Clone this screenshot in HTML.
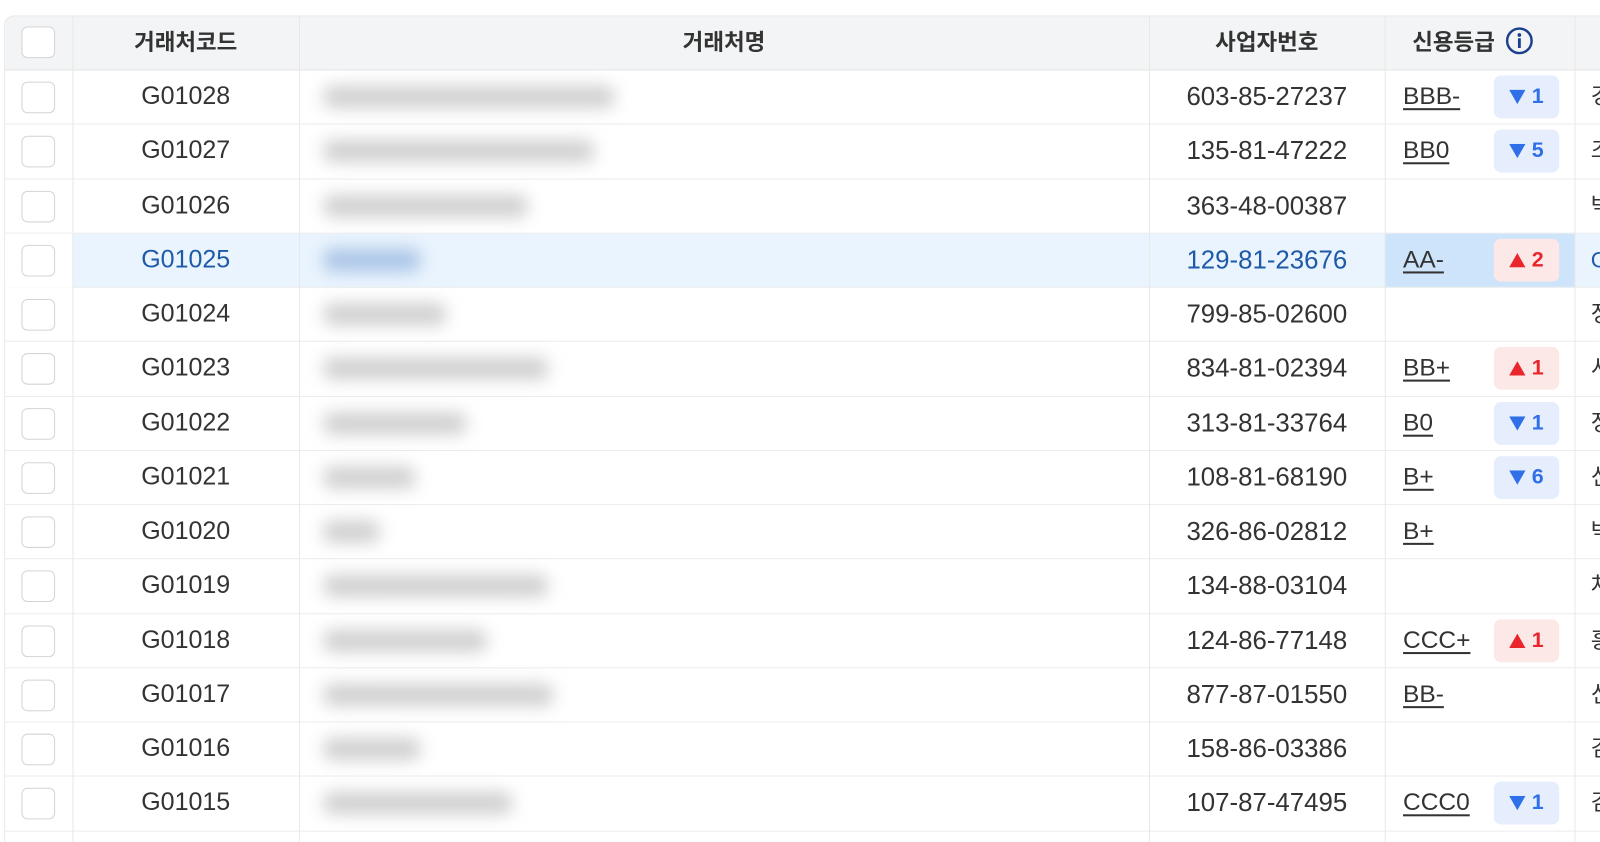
<!DOCTYPE html>
<html><head><meta charset="utf-8"><style>
*{margin:0;padding:0;box-sizing:border-box}
html,body{width:1600px;height:842px;overflow:hidden}
body{background:#fff;font-family:"Liberation Sans","Noto Sans CJK KR",sans-serif;color:#333;position:relative}
.wrap{position:absolute;left:0;top:0;width:1568px;height:825px;transform:scale(1.0204);transform-origin:0 0;overflow:hidden}
.tbl{position:absolute;left:4px;top:15px;width:1564px;height:810px;border-left:1px solid #e6e6e6;border-top:1px solid #e6e6e6;border-radius:10px 0 0 0;overflow:hidden}
.hd{position:absolute;left:0;top:0;width:1700px;height:53px;background:#f3f4f6;border-bottom:1px solid #e4e4e4}
.vl{position:absolute;top:0;width:1px;height:900px;background:#e8e8e8}
.r{position:absolute;left:0;width:1700px;height:53.25px;border-bottom:1px solid #ececec}
.r.sel{background:#eaf4fe}
.c{position:absolute;top:0;height:52px;line-height:52px;font-size:25px;white-space:nowrap}
.cb{position:absolute;left:16px;top:11px;width:33px;height:31px;border:1.5px solid #d4d4d4;border-radius:6px;background:#fff}
.code{left:66px;width:222px;text-align:center;font-size:24.5px}
.biz{left:1121px;width:231px;text-align:center;font-size:25.3px}
.gr{left:1370px;font-size:24px;text-decoration:underline;text-underline-offset:4px;text-decoration-thickness:1.5px}
.bar{position:absolute;left:312px;top:15px;height:22px;background:#d0d0d0;filter:blur(8px);border-radius:8px}
.bd{position:absolute;left:1459px;top:5px;width:64px;height:42px;border-radius:7px;font-size:21px;font-weight:bold;line-height:42px;text-align:center}
.bd svg{vertical-align:-1px;margin-right:6px}
.dn{background:#e6eefe;color:#2f6fe8}
.up{background:#fde8e8;color:#e8262b}
.lc{left:1554px;font-size:22px}
.h{position:absolute;top:0;height:53px;line-height:52px;font-size:22px;font-weight:bold;color:#333;text-align:center}
</style></head><body>
<svg width="0" height="0" style="position:absolute"><defs>
<symbol id="dn" viewBox="0 0 16 14"><path d="M0 0H16L8 14Z" fill="currentColor"/></symbol>
<symbol id="up" viewBox="0 0 16 14"><path d="M0 14H16L8 0Z" fill="currentColor"/></symbol>
</defs></svg>
<div class="wrap">
<div class="tbl">
<div class="hd">
 <div class="cb" style="top:10px"></div>
 <div class="h" style="left:66px;width:222px">거래처코드</div>
 <div class="h" style="left:288px;width:833px">거래처명</div>
 <div class="h" style="left:1121px;width:231px">사업자번호</div>
 <div class="h" style="left:1352px;width:190px;text-align:left;padding-left:27px">신용등급 <svg width="28" height="28" viewBox="0 0 28 28" style="vertical-align:-5px;margin-left:4px"><circle cx="14" cy="14" r="12" fill="none" stroke="#1a3f8f" stroke-width="2.4"/><circle cx="14" cy="8.3" r="1.8" fill="#1a3f8f"/><rect x="12.6" y="11.5" width="2.8" height="9.5" fill="#1a3f8f"/></svg></div>
</div>

<div class="r" style="top:53px"><div class="cb"></div><div class="c code">G01028</div><div class="bar" style="width:285px"></div><div class="c biz">603-85-27237</div><div class="c gr">BBB-</div><div class="bd dn"><svg width="16" height="14"><use href="#dn"/></svg>1</div><div class="c lc">경</div></div>
<div class="r" style="top:106.25px"><div class="cb"></div><div class="c code">G01027</div><div class="bar" style="width:265px"></div><div class="c biz">135-81-47222</div><div class="c gr">BB0</div><div class="bd dn"><svg width="16" height="14"><use href="#dn"/></svg>5</div><div class="c lc">조</div></div>
<div class="r" style="top:159.5px"><div class="cb"></div><div class="c code">G01026</div><div class="bar" style="width:200px"></div><div class="c biz">363-48-00387</div><div class="c lc">박</div></div>
<div class="r sel" style="top:212.75px"><div style="position:absolute;left:0;top:0;width:66px;height:53px;background:#fff"></div><div class="cb"></div><div class="c code" style="color:#1f5aa8">G01025</div><div class="bar" style="width:95px;background:#a9c4e6"></div><div class="c biz" style="color:#1f5aa8">129-81-23676</div><div style="position:absolute;left:1352px;top:0;width:186px;height:52px;background:#cde4fa"></div><div class="c gr">AA-</div><div class="bd up"><svg width="16" height="14"><use href="#up"/></svg>2</div><div class="c lc" style="color:#1f5aa8">C</div></div>
<div class="r" style="top:266px"><div class="cb"></div><div class="c code">G01024</div><div class="bar" style="width:120px"></div><div class="c biz">799-85-02600</div><div class="c lc">정</div></div>
<div class="r" style="top:319.25px"><div class="cb"></div><div class="c code">G01023</div><div class="bar" style="width:220px"></div><div class="c biz">834-81-02394</div><div class="c gr">BB+</div><div class="bd up"><svg width="16" height="14"><use href="#up"/></svg>1</div><div class="c lc">서</div></div>
<div class="r" style="top:372.5px"><div class="cb"></div><div class="c code">G01022</div><div class="bar" style="width:140px"></div><div class="c biz">313-81-33764</div><div class="c gr">B0</div><div class="bd dn"><svg width="16" height="14"><use href="#dn"/></svg>1</div><div class="c lc">정</div></div>
<div class="r" style="top:425.75px"><div class="cb"></div><div class="c code">G01021</div><div class="bar" style="width:90px"></div><div class="c biz">108-81-68190</div><div class="c gr">B+</div><div class="bd dn"><svg width="16" height="14"><use href="#dn"/></svg>6</div><div class="c lc">신</div></div>
<div class="r" style="top:479px"><div class="cb"></div><div class="c code">G01020</div><div class="bar" style="width:55px"></div><div class="c biz">326-86-02812</div><div class="c gr">B+</div><div class="c lc">박</div></div>
<div class="r" style="top:532.25px"><div class="cb"></div><div class="c code">G01019</div><div class="bar" style="width:220px"></div><div class="c biz">134-88-03104</div><div class="c lc">차</div></div>
<div class="r" style="top:585.5px"><div class="cb"></div><div class="c code">G01018</div><div class="bar" style="width:160px"></div><div class="c biz">124-86-77148</div><div class="c gr">CCC+</div><div class="bd up"><svg width="16" height="14"><use href="#up"/></svg>1</div><div class="c lc">홍</div></div>
<div class="r" style="top:638.75px"><div class="cb"></div><div class="c code">G01017</div><div class="bar" style="width:225px"></div><div class="c biz">877-87-01550</div><div class="c gr">BB-</div><div class="c lc">신</div></div>
<div class="r" style="top:692px"><div class="cb"></div><div class="c code">G01016</div><div class="bar" style="width:95px"></div><div class="c biz">158-86-03386</div><div class="c lc">김</div></div>
<div class="r" style="top:745.25px"><div class="cb"></div><div class="c code">G01015</div><div class="bar" style="width:185px"></div><div class="c biz">107-87-47495</div><div class="c gr">CCC0</div><div class="bd dn"><svg width="16" height="14"><use href="#dn"/></svg>1</div><div class="c lc">김</div></div>
<div class="r" style="top:798.5px"><div class="cb"></div></div>

<div class="vl" style="left:66px"></div>
<div class="vl" style="left:288px"></div>
<div class="vl" style="left:1121px"></div>
<div class="vl" style="left:1352px"></div>
<div class="vl" style="left:1538px"></div>
</div>
</div>
</body></html>
